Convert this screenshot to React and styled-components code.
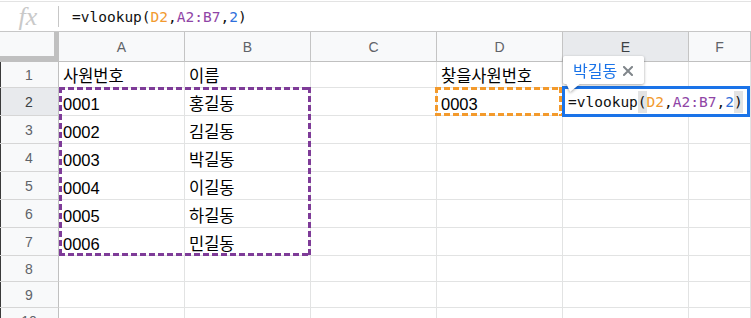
import React from 'react';
import styled, { createGlobalStyle, css } from 'styled-components';

const GlobalStyle = createGlobalStyle`
  html, body { margin: 0; padding: 0; background: #fff; }
  body {
    width: 751px; height: 318px; overflow: hidden;
    font-family: "Liberation Sans", Arial, "Noto Sans CJK KR", sans-serif;
  }
`;

const MONO = `"DejaVu Sans Mono", "Liberation Mono", monospace`;

const Page = styled.div`
  width: 751px;
  height: 318px;
  overflow: hidden;
  display: flex;
  flex-direction: column;
  background: #fff;
`;

const FormulaBar = styled.div`
  flex-shrink: 0;
  margin-top: 1px;
  height: 31px;
  box-sizing: border-box;
  border-top: 1px solid #e3e3e3;
  border-bottom: 1px solid #c7c7c7;
  display: flex;
  align-items: center;
`;

const FxLabel = styled.div`
  width: 58px;
  display: flex;
  justify-content: center;
  font-family: "Liberation Serif", "DejaVu Serif", serif;
  font-style: italic;
  font-size: 26px;
  color: #c9c9c9;
  line-height: 24px;
  padding-right: 2px;
  box-sizing: border-box;
`;

const Separator = styled.div`
  width: 1px;
  height: 21px;
  background: #c7c7c7;
`;

const FormulaText = styled.div`
  margin-left: 13px;
  font-family: ${MONO};
  font-size: 14.5px;
  color: #111;
  white-space: pre;
  line-height: 20px;
  padding-top: 1px;
`;

const Tok = styled.span`
  color: ${p => p.$c || 'inherit'};
`;

const Grid = styled.div`
  flex: 1;
  min-height: 0;
  overflow: hidden;
  display: grid;
  grid-template-columns: 59px repeat(5, 126px) 1fr;
  grid-template-rows: 30px 26px repeat(6, 28px) 26px 26px 26px;
`;

const baseCell = css`
  box-sizing: border-box;
  position: relative;
  display: flex;
  min-width: 0;
`;

const Corner = styled.div`
  ${baseCell};
  background: #f8f9fa;
  border-right: 1px solid #c0c0c0;
  border-bottom: 1px solid #c0c0c0;
  box-shadow: inset -4px -5px 0 #c0c0c0;
`;

const ColHeader = styled.div`
  ${baseCell};
  align-items: center;
  justify-content: center;
  background: ${p => (p.$active ? '#e8eaed' : '#f8f9fa')};
  color: ${p => (p.$active ? '#3c4043' : '#5f6368')};
  border-right: 1px solid #c4c4c4;
  border-bottom: 1px solid #c0c0c0;
  font-size: 14px;
  padding-top: 1px;
`;

const RowHeader = styled.div`
  ${baseCell};
  align-items: center;
  justify-content: center;
  background: ${p => (p.$active ? '#e8eaed' : '#f8f9fa')};
  color: ${p => (p.$active ? '#3c4043' : '#5f6368')};
  border-right: 1px solid #c0c0c0;
  border-bottom: 1px solid #d6d6d6;
  box-shadow: inset 1px 0 0 #3a3a3a;
  font-size: 14px;
  padding-top: 1px;
`;

const Cell = styled.div`
  ${baseCell};
  align-items: flex-end;
  padding: 0 4px 2px 4px;
  border-right: 1px solid #e2e3e3;
  border-bottom: 1px solid #e2e3e3;
  font-size: 16.5px;
  line-height: 18px;
  color: #000;
  white-space: nowrap;
`;

const dashed = (color) => css`
  background:
    repeating-linear-gradient(90deg, ${color} 0 6px, transparent 6px 9px) top left / 100% 3px no-repeat,
    repeating-linear-gradient(90deg, ${color} 0 6px, transparent 6px 9px) bottom left / 100% 3px no-repeat,
    repeating-linear-gradient(180deg, ${color} 0 6px, transparent 6px 9px) top left / 3px 100% no-repeat,
    repeating-linear-gradient(180deg, ${color} 0 6px, transparent 6px 9px) top right / 3px 100% no-repeat;
`;

const RangeMarker = styled.div`
  position: absolute;
  z-index: 2;
  pointer-events: none;
  ${p => dashed(p.$color)};
`;

const Editor = styled.div`
  position: absolute;
  z-index: 3;
  left: -1px;
  top: -2px;
  width: 188px;
  height: 31px;
  box-sizing: border-box;
  border: 3px solid #1a73e8;
  background: #fff;
  display: flex;
  align-items: center;
  padding-left: 3px;
  font-family: ${MONO};
  font-size: 14.5px;
  color: #111;
  white-space: pre;
`;

const Paren = styled.span`
  display: inline-block;
  line-height: 22px;
  background: #e3e3e3;
`;

const Tooltip = styled.div`
  position: absolute;
  z-index: 4;
  left: -2px;
  top: -33px;
  width: 81px;
  height: 28px;
  box-sizing: border-box;
  display: flex;
  align-items: center;
  gap: 6px;
  padding-left: 10px;
  filter: drop-shadow(0 1px 1.5px rgba(0, 0, 0, 0.35));

  &::before {
    content: '';
    position: absolute;
    inset: 0;
    background: #fff;
    border-radius: 2px;
    z-index: -1;
  }
  &::after {
    content: '';
    position: absolute;
    left: 3px;
    bottom: -8px;
    width: 15px;
    height: 9px;
    background: #fff;
    clip-path: polygon(0 0, 100% 0, 27% 100%);
  }
`;

const TooltipText = styled.span`
  font-family: "Noto Sans CJK KR", sans-serif;
  font-size: 16px;
  line-height: 20px;
  color: #1a73e8;
`;

const CloseIcon = () => (
  <svg width="10" height="10" viewBox="0 0 10 10" style={{ display: 'block', marginTop: '2px' }}>
    <path d="M1 1 L9 9 M9 1 L1 9" stroke="#80868b" strokeWidth="2" strokeLinecap="square" />
  </svg>
);

const FormulaTokens = ({ highlight }) => (
  <>
    =vlookup{highlight ? <Paren>(</Paren> : '('}
    <Tok $c="#f29a30">D2</Tok>,
    <Tok $c="#8f45a6">A2:B7</Tok>,
    <Tok $c="#2f6fdb">2</Tok>
    {highlight ? <Paren>)</Paren> : ')'}
  </>
);

const COLS = ['A', 'B', 'C', 'D', 'E', 'F'];

const DATA = {
  1: { A: '사원번호', B: '이름', D: '찾을사원번호', E: '찾은사원명' },
  2: { A: '0001', B: '홍길동', D: '0003' },
  3: { A: '0002', B: '김길동' },
  4: { A: '0003', B: '박길동' },
  5: { A: '0004', B: '이길동' },
  6: { A: '0005', B: '하길동' },
  7: { A: '0006', B: '민길동' },
};

export default function App() {
  const rows = [1, 2, 3, 4, 5, 6, 7, 8, 9, 10];
  return (
    <Page>
      <GlobalStyle />
      <FormulaBar>
        <FxLabel>fx</FxLabel>
        <Separator />
        <FormulaText>
          <FormulaTokens />
        </FormulaText>
      </FormulaBar>
      <Grid>
        <Corner />
        {COLS.map(c => (
          <ColHeader key={c} $active={c === 'E'}>{c}</ColHeader>
        ))}
        {rows.map(r => (
          <React.Fragment key={r}>
            <RowHeader $active={r === 2}>{r}</RowHeader>
            {COLS.map(c => {
              const id = `${c}${r}`;
              return (
                <Cell key={id}>
                  {DATA[r] && DATA[r][c]}
                  {id === 'A2' && (
                    <RangeMarker $color="#7e3b98" style={{ left: 0, top: -1, width: 252, height: 169 }} />
                  )}
                  {id === 'D2' && (
                    <RangeMarker $color="#f39a2c" style={{ left: -2, top: -1, width: 127, height: 29 }} />
                  )}
                  {id === 'E2' && (
                    <Editor>
                      <FormulaTokens highlight />
                      <Tooltip>
                        <TooltipText>박길동</TooltipText>
                        <CloseIcon />
                      </Tooltip>
                    </Editor>
                  )}
                </Cell>
              );
            })}
          </React.Fragment>
        ))}
      </Grid>
    </Page>
  );
}
